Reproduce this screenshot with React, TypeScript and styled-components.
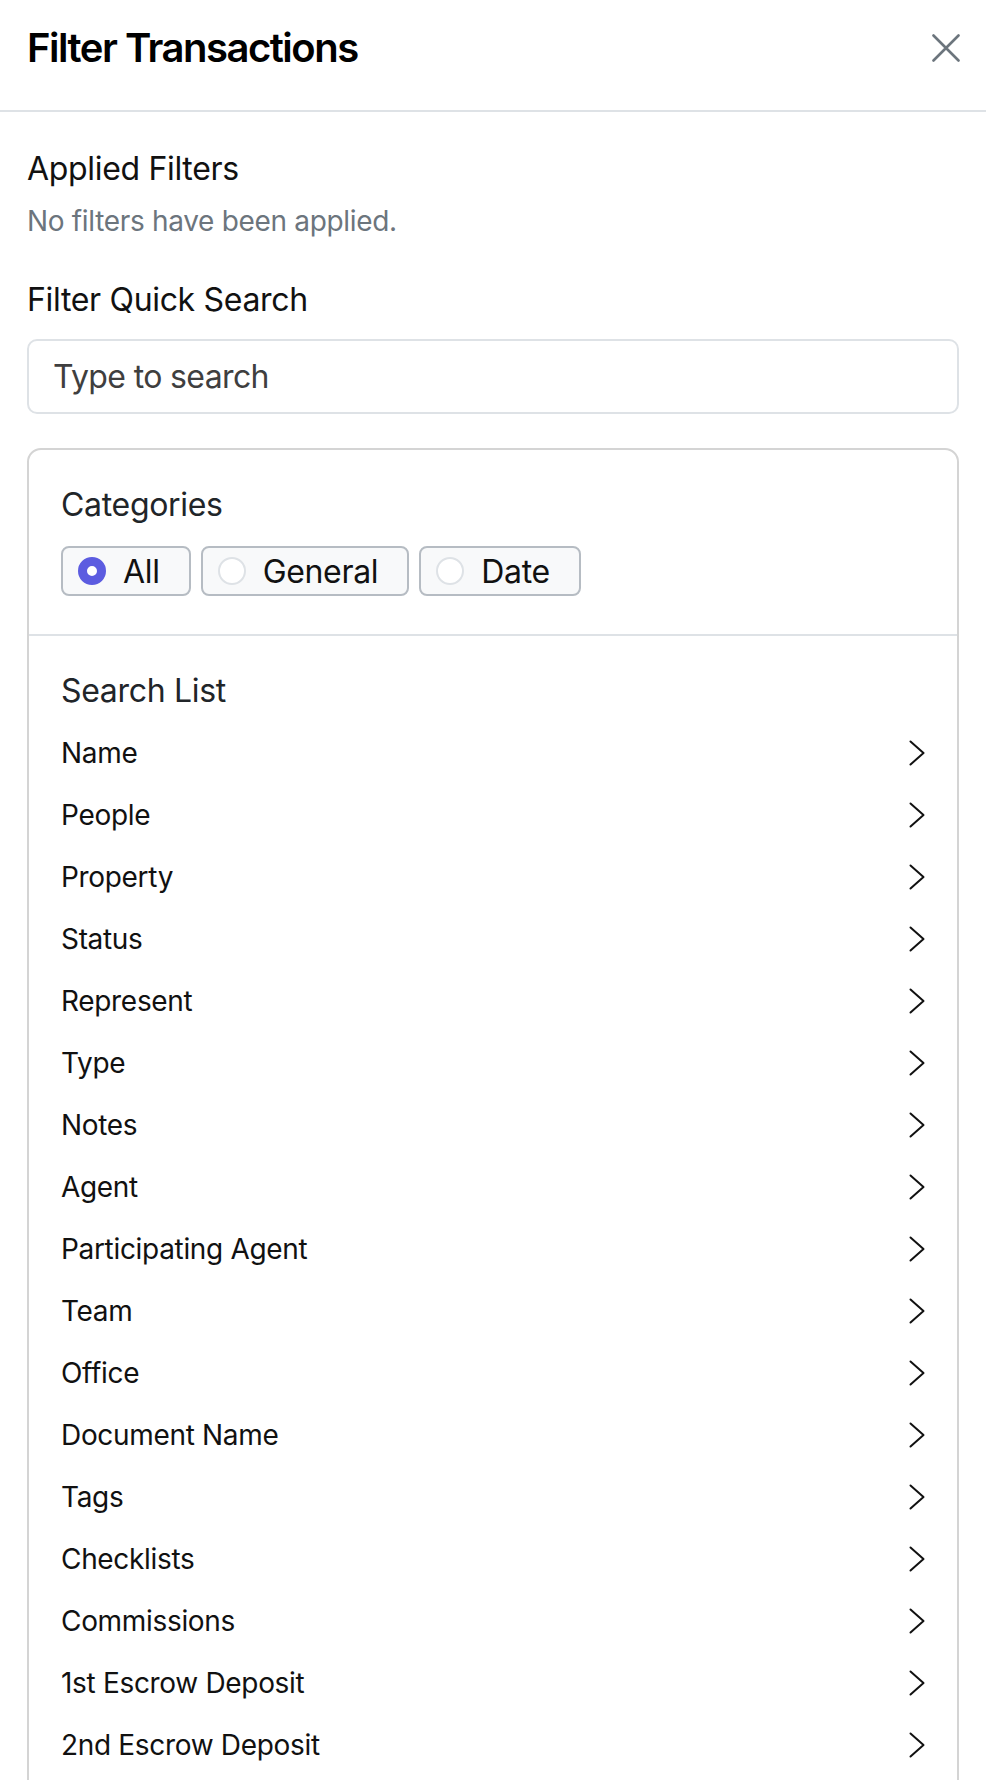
import React from 'react';
import styled, { createGlobalStyle } from 'styled-components';

const GlobalStyle = createGlobalStyle`
  * { box-sizing: border-box; }
  body {
    margin: 0;
    background: #fff;
    font-family: Inter, "Noto Sans", sans-serif;
    letter-spacing: -0.02em;
    color: #111;
  }
`;

const Panel = styled.div`
  width: 986px;
  min-height: 1780px;
  background: #fff;
`;

const Header = styled.header`
  display: flex;
  align-items: center;
  justify-content: space-between;
  padding: 24px 26px 38px 27px;
  border-bottom: 2px solid #dee2e6;
`;

const Title = styled.h1`
  margin: 0;
  font-size: 40px;
  line-height: 48px;
  font-weight: 600;
  letter-spacing: -1.5px;
  color: #000;
`;

const CloseButton = styled.button`
  display: flex;
  padding: 0;
  border: none;
  background: none;
  cursor: pointer;
`;

const Body = styled.div`
  padding: 33px 27px 40px;
`;

const Label = styled.h2<{ $tone?: 'dark' | 'soft'; $gap?: number }>`
  margin: ${p => p.$gap ?? 0}px 0 0;
  font-size: 32px;
  line-height: 48px;
  font-weight: 400;
  color: ${p => (p.$tone === 'soft' ? '#212529' : '#111')};
`;

const Hint = styled.p`
  margin: 7px 0 0;
  font-size: 28px;
  line-height: 42px;
  color: #6c757d;
`;

const SearchInput = styled.input`
  display: block;
  width: 100%;
  height: 75px;
  margin-top: 15px;
  padding: 0 24px;
  border: 2px solid #dee2e6;
  border-radius: 10px;
  font-family: inherit;
  font-size: 32px;
  letter-spacing: -0.02em;
  color: #111;
  outline: none;

  &::placeholder {
    color: #3f3f3f;
  }
`;

const Card = styled.div`
  margin-top: 34px;
  border: 2px solid #d4d4d4;
  border-radius: 14px;
  overflow: hidden;
`;

const CardSection = styled.section<{ $divided?: boolean }>`
  padding: 31px 32px 38px;
  border-top: ${p => (p.$divided ? '2px solid #dee2e6' : 'none')};
`;

const ChoiceGroup = styled.div`
  display: flex;
  gap: 10px;
  margin-top: 17px;
`;

const Choice = styled.label`
  display: flex;
  align-items: center;
  gap: 17px;
  height: 50px;
  padding: 0 29px 0 15px;
  background: #f8f9fa;
  border: 2px solid #b6bcc3;
  border-radius: 8px;
  font-size: 32px;
  color: #111;
  cursor: pointer;
`;

const Dot = styled.span<{ $checked: boolean }>`
  width: 28px;
  height: 28px;
  border-radius: 50%;
  background: #fff;
  border: ${p => (p.$checked ? '9px solid #5c5ce0' : '2px solid #dee2e6')};
`;

const ListTitle = styled(Label)`
  margin-bottom: 7px;
`;

const Row = styled.div`
  display: flex;
  align-items: center;
  justify-content: space-between;
  height: 62px;
  font-size: 28px;
  color: #111;
  cursor: pointer;
`;

const CloseIcon = () => (
  <svg width="28" height="28" viewBox="0 0 28 28" fill="none">
    <path d="M1.5 1.5L26.5 26.5M26.5 1.5L1.5 26.5" stroke="#6c757d" strokeWidth="2.6" strokeLinecap="round" />
  </svg>
);

const Chevron = () => (
  <svg width="16" height="26" viewBox="0 0 16 26" fill="none">
    <path d="M1.5 1.5L14.5 13L1.5 24.5" stroke="#111" strokeWidth="2" strokeLinecap="round" strokeLinejoin="round" />
  </svg>
);

const categories = ['All', 'General', 'Date'];

const fields = [
  'Name',
  'People',
  'Property',
  'Status',
  'Represent',
  'Type',
  'Notes',
  'Agent',
  'Participating Agent',
  'Team',
  'Office',
  'Document Name',
  'Tags',
  'Checklists',
  'Commissions',
  '1st Escrow Deposit',
  '2nd Escrow Deposit',
];

function App() {
  const [category, setCategory] = React.useState('All');
  const [query, setQuery] = React.useState('');

  return (
    <Panel>
      <GlobalStyle />
      <Header>
        <Title>Filter Transactions</Title>
        <CloseButton aria-label="Close">
          <CloseIcon />
        </CloseButton>
      </Header>
      <Body>
        <Label>Applied Filters</Label>
        <Hint>No filters have been applied.</Hint>
        <Label $gap={34}>Filter Quick Search</Label>
        <SearchInput
          placeholder="Type to search"
          value={query}
          onChange={(e) => setQuery(e.target.value)}
        />
        <Card>
          <CardSection>
            <Label $tone="soft">Categories</Label>
            <ChoiceGroup>
              {categories.map((c) => (
                <Choice key={c} onClick={() => setCategory(c)}>
                  <Dot $checked={category === c} />
                  {c}
                </Choice>
              ))}
            </ChoiceGroup>
          </CardSection>
          <CardSection $divided>
            <ListTitle $tone="soft">Search List</ListTitle>
            {fields.map((f) => (
              <Row key={f}>
                {f}
                <Chevron />
              </Row>
            ))}
          </CardSection>
        </Card>
      </Body>
    </Panel>
  );
}

export default App;
